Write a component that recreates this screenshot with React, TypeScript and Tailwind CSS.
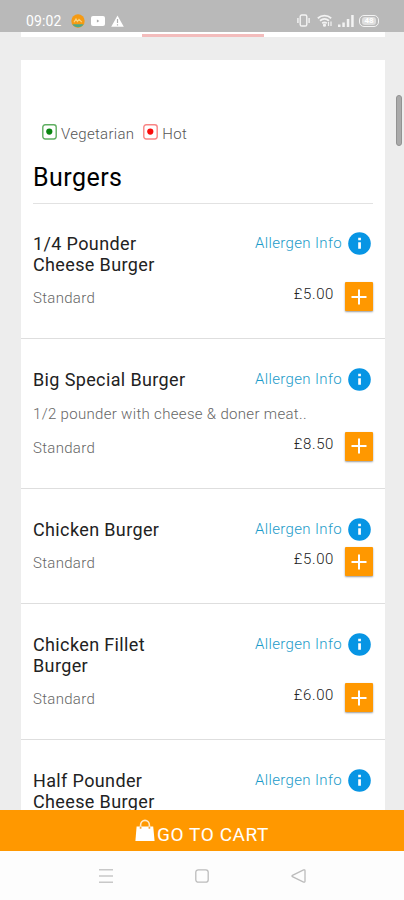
interface MenuItem {
  name: string;
  description?: string;
  option?: string;
  price?: string;
}

const items: MenuItem[] = [
  { name: "1/4 Pounder Cheese Burger", option: "Standard", price: "£5.00" },
  {
    name: "Big Special Burger",
    description: "1/2 pounder with cheese & doner meat..",
    option: "Standard",
    price: "£8.50",
  },
  { name: "Chicken Burger", option: "Standard", price: "£5.00" },
  { name: "Chicken Fillet Burger", option: "Standard", price: "£6.00" },
  { name: "Half Pounder Cheese Burger" },
];

function StatusBar() {
  return (
    <div className="flex h-8 shrink-0 items-center justify-between bg-[#b9b9b9] pt-[9px] pr-[25px] pl-[26px] text-white">
      <div className="flex items-center">
        <span className="w-[45px] text-[14px] leading-none tracking-[0.1px]">09:02</span>
        <svg width="14" height="14" viewBox="0 0 14 14">
          <circle cx="7" cy="7" r="6.7" fill="#f59a13" />
          <path d="M1.4 10.2h11.2a6.7 6.7 0 0 1-11.2 0z" fill="#4ba88b" />
          <path d="M3 8.2 5 5l1.4 2.5L8 5.4l2.8 2.8" fill="none" stroke="#fbd27c" strokeWidth="1.2" />
        </svg>
        <svg className="ml-[6px]" width="14" height="10" viewBox="0 0 14 10">
          <rect width="14" height="10" rx="2" fill="#fff" />
          <path d="M5.9 3.4v3.2L8.4 5z" fill="#aaa" />
        </svg>
        <svg className="ml-[6px]" width="13" height="12" viewBox="0 0 13 12">
          <path d="M6.5.4 12.8 11.7H.2z" fill="#fff" />
          <path d="M6.5 4v4M6.5 9.2v1.3" stroke="#b0b0b0" strokeWidth="1.2" />
        </svg>
      </div>

      <div className="flex items-center">
        <svg width="13" height="13" viewBox="0 0 13 13" fill="none" stroke="#f3f3f3" strokeWidth="1.4">
          <rect x="3.2" y="1" width="6.6" height="11" rx="1.6" />
          <path d="M.9 4v5M12.1 4v5" />
        </svg>
        <svg className="ml-[7px]" width="16" height="13" viewBox="0 0 16 13" fill="none" stroke="#f3f3f3" strokeWidth="1.8">
          <path d="M.8 4.2c4-3.4 9.4-3.4 13.4 0M3 6.7c2.8-2.2 6.2-2.2 9 0M5.2 9.2c1.5-1.1 3.1-1.1 4.6 0" />
          <circle cx="7.5" cy="11.2" r=".7" fill="#f3f3f3" />
          <path d="M11.5 8v4M14 7.5v4.5" strokeWidth="1.2" />
        </svg>
        <svg className="ml-[5px]" width="16" height="12" viewBox="0 0 16 12" fill="#f3f3f3">
          <path d="M0 9.5h2.5V12H0zM4.3 7.5h2.5V12H4.3zM8.8 4h2.5v8H8.8zM13.2 0h2.5v12h-2.5z" />
        </svg>
        <span className="ml-[5px] flex h-[12px] w-[20px] items-center justify-center rounded-[5px] border border-[#f3f3f3]">
          <span className="flex h-[8px] w-[14px] items-center justify-center rounded-[3px] bg-[#dedede] text-[8px] leading-none font-bold text-white">
            48
          </span>
        </span>
      </div>
    </div>
  );
}

function InfoIcon() {
  return (
    <svg className="shrink-0" width="23" height="23" viewBox="0 0 23 23">
      <circle cx="11.5" cy="11.5" r="11.3" fill="#0795e4" />
      <path d="M10.2 5.8h2.7v2.5h-2.7zM10.2 10.2h2.7v6.6h-2.7z" fill="#fff" />
    </svg>
  );
}

function BagIcon() {
  return (
    <svg className="-mt-[8px] shrink-0" width="20" height="23" viewBox="0 0 20 23">
      <path d="M1.6 7.6h16.6L19.6 22H.4z" fill="#fff" />
      <path d="M5.6 9.5V6a4.4 4.6 0 0 1 8.8 0v3.5" fill="none" stroke="#ffe9c9" strokeWidth="1.6" />
      <path d="M5.6 7.8v2M14.4 7.8v2" stroke="#f3a63d" strokeWidth="1.6" />
    </svg>
  );
}

function LegendMark({ hot = false }: { hot?: boolean }) {
  return (
    <svg className="-mt-[4px]" width="15" height="16" viewBox="0 0 15 16">
      <rect
        x=".8"
        y=".8"
        width="13.4"
        height="14.2"
        rx="2.4"
        fill="#fff"
        stroke={hot ? "#f98585" : "#5fae61"}
        strokeWidth="1.4"
      />
      <circle cx="7.3" cy="7.6" r="3.1" fill={hot ? "#f90d0d" : "#0a8511"} />
    </svg>
  );
}

function ItemRow({ item }: { item: MenuItem }) {
  return (
    <div className="border-b border-[#dedede] px-3 pt-[31px] pb-[27px] last:border-b-0">
      <div className="flex items-start justify-between">
        <h3 className="max-w-[155px] text-[18px] leading-[20.5px] font-normal tracking-[0.37px] text-[#222]">
          {item.name}
        </h3>
        <div className="-mt-[2px] mr-[2px] -mb-[2px] flex items-center gap-[6px]">
          <span className="text-[15px] font-light tracking-[0.35px] whitespace-nowrap text-[#1c9bc9]">Allergen Info</span>
          <InfoIcon />
        </div>
      </div>
      {item.description && (
        <p className="mt-[13px] text-[15px] leading-[21px] font-light tracking-[0.32px] text-[#666]">{item.description}</p>
      )}
      {item.option && (
        <div className="mt-[7px] flex h-[29px] items-center">
          <span className="flex-1 pt-[4px] text-[15px] font-light tracking-[0.3px] text-[#666]">{item.option}</span>
          <span className="mr-[11px] -mt-[4px] text-[15px] font-light tracking-[0.6px] text-[#222]">{item.price}</span>
          <button className="flex h-[29px] w-[28px] items-center justify-center rounded-[1px] bg-[#ff9800] shadow-[0_1px_2px_rgba(0,0,0,0.4)]">
            <svg width="16" height="16" viewBox="0 0 16 16" stroke="#fff" strokeWidth="2">
              <path d="M8 .5v15M.5 8h15" />
            </svg>
          </button>
        </div>
      )}
    </div>
  );
}

export default function App() {
  return (
    <div className="relative flex h-[900px] w-[404px] flex-col overflow-hidden bg-[#ededed] font-[Roboto,sans-serif]">
      <StatusBar />

      <div className="min-h-0 flex-1 overflow-hidden pr-[19px] pl-[21px]">
        {/* Bottom edge of the tab strip */}
        <div className="flex h-[5px] justify-center bg-white pt-[2px]">
          <div className="h-[3px] w-[122px] bg-[#f3bcbc]" />
        </div>

        <div className="mt-[23px] bg-white">
          <div className="px-3 pt-[64px]">
            <div className="flex h-[20px] items-center pl-[9px] text-[15px] font-light tracking-[0.3px] text-[#555]">
              <LegendMark />
              <span className="mr-[9px] ml-[4px]">Vegetarian</span>
              <LegendMark hot />
              <span className="ml-[4px]">Hot</span>
            </div>
            <h2 className="mt-[18px] -mb-px h-[42px] border-b border-[#e2e2e2] text-[25px] leading-[32px] font-normal tracking-[0.45px] text-black">
              Burgers
            </h2>
          </div>
          {items.map((item) => (
            <ItemRow key={item.name} item={item} />
          ))}
        </div>
      </div>

      {/* Scroll thumb */}
      <div className="absolute top-[95px] right-[2px] h-[51px] w-[6px] rounded-full border border-[#929292] bg-[#aaa]" />

      <button className="flex h-[41px] shrink-0 items-center justify-center gap-[2px] bg-[#ff9800] pt-[7px] text-[19px] leading-none tracking-[0.55px] text-white">
        <BagIcon />
        GO TO CART
      </button>

      <nav className="flex h-[49px] shrink-0 items-center justify-center gap-[82px] bg-[#fdfdfd]">
        <svg width="14" height="14" viewBox="0 0 14 14" stroke="#c8c8c8" strokeWidth="1.5">
          <path d="M0 .8h14M0 7h14M0 13.2h14" />
        </svg>
        <svg width="14" height="14" viewBox="0 0 14 14" fill="none" stroke="#bcbcbc" strokeWidth="1.3">
          <rect x=".8" y=".8" width="12.4" height="12.4" rx="2.5" />
        </svg>
        <svg width="15" height="14" viewBox="0 0 15 14" fill="none" stroke="#bcbcbc" strokeWidth="1.3">
          <path d="M12.6.9 1.4 6.3a.8.8 0 0 0 0 1.4l11.2 5.4c.8.3 1.4 0 1.4-.8V1.7c0-.8-.6-1.1-1.4-.8z" />
        </svg>
      </nav>
    </div>
  );
}
